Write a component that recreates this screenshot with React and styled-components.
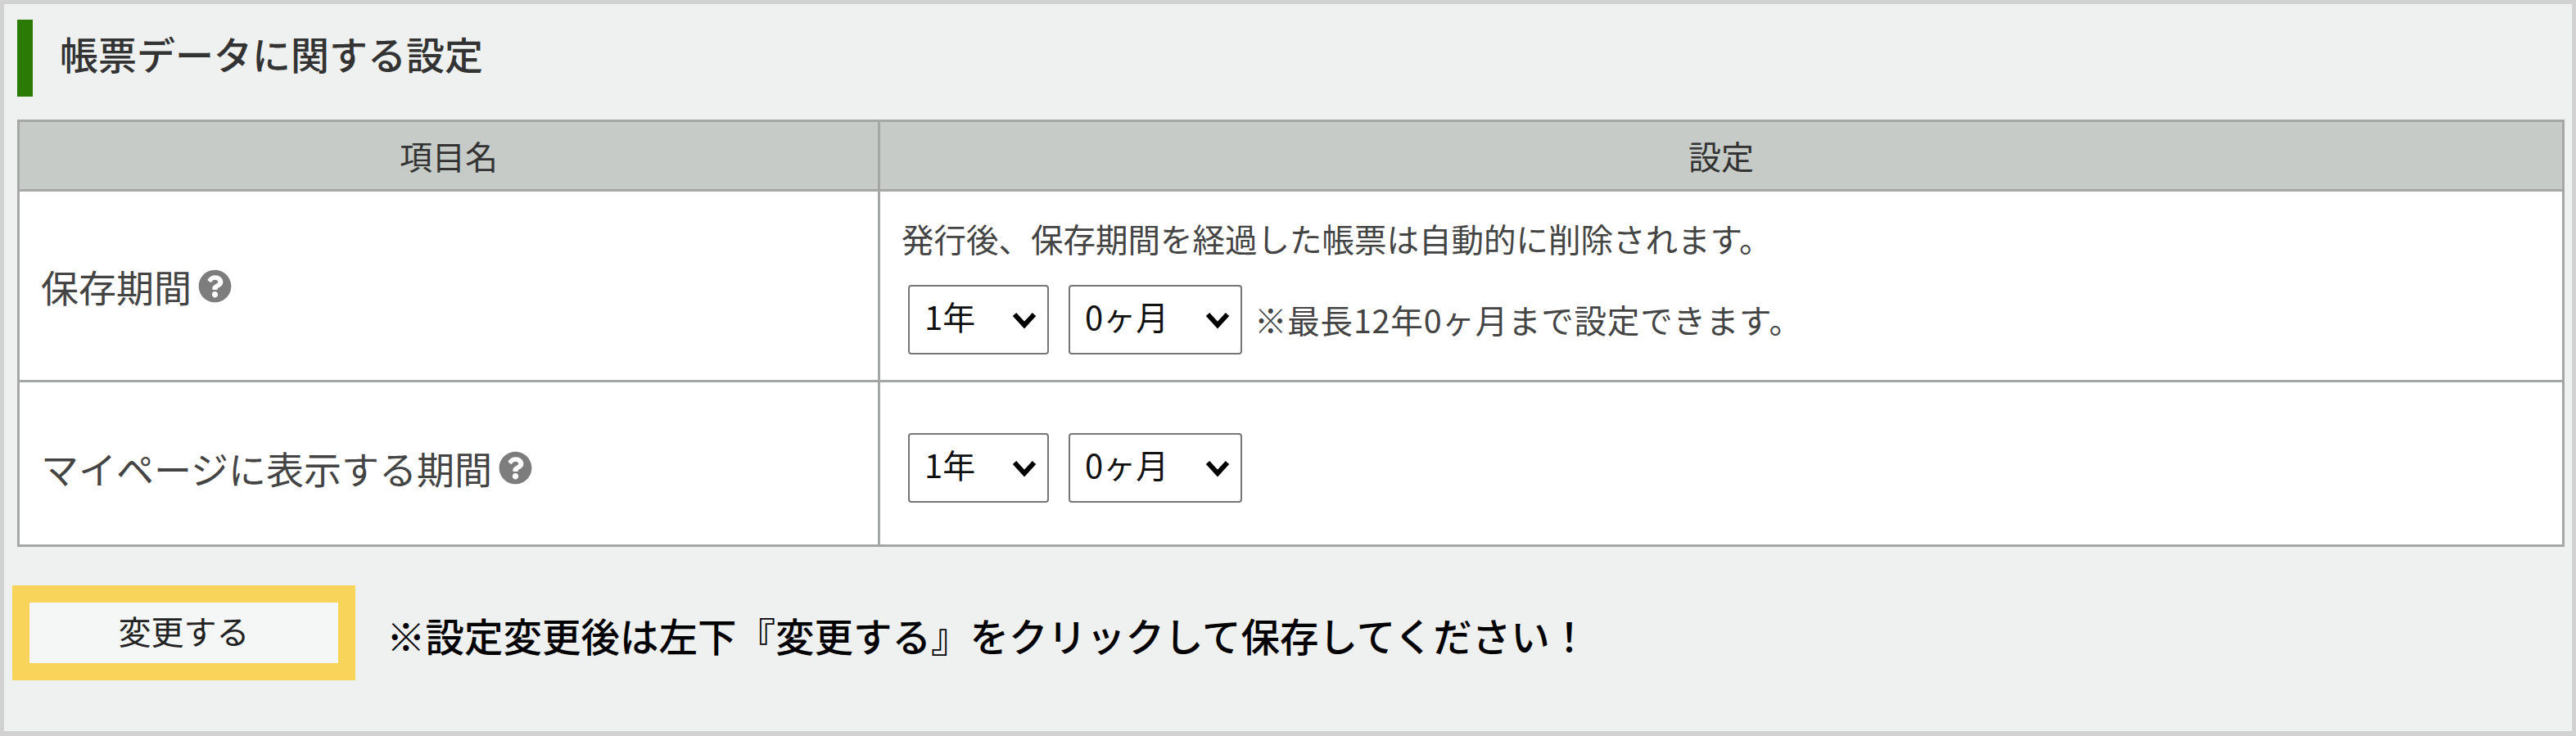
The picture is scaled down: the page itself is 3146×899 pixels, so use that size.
import React from "react";
import styled, { createGlobalStyle } from "styled-components";
import { FaQuestionCircle } from "react-icons/fa";

const GlobalStyle = createGlobalStyle`
  html, body {
    margin: 0;
    padding: 0;
    background: #d2d2d2;
  }
  body {
    font-family: "Noto Sans CJK JP", "Liberation Sans", sans-serif;
    color: #333;
  }
`;

const YEARS = ["1年", "2年", "3年"];
const MONTHS = ["0ヶ月", "1ヶ月", "2ヶ月"];

const PeriodSelect = ({ options, width }) => (
  <SelectWrap $width={width}>
    <Select defaultValue={options[0]}>
      {options.map((o) => (
        <option key={o}>{o}</option>
      ))}
    </Select>
    <Chevron viewBox="0 0 30 24" aria-hidden="true">
      <path d="M3 5 L15 18 L27 5" />
    </Chevron>
  </SelectWrap>
);

const PeriodSelects = () => (
  <>
    <PeriodSelect options={YEARS} width={172} />
    <PeriodSelect options={MONTHS} width={212} />
  </>
);

const App = () => (
  <>
    <GlobalStyle />
    <Page>
      <Title>帳票データに関する設定</Title>
      <SettingsTable>
        <colgroup>
          <col style={{ width: 1051 }} />
          <col />
        </colgroup>
        <thead>
          <tr>
            <HeadCell>項目名</HeadCell>
            <HeadCell>設定</HeadCell>
          </tr>
        </thead>
        <tbody>
          <Row $height={233}>
            <LabelCell>
              <Label>
                保存期間
                <HelpIcon />
              </Label>
            </LabelCell>
            <ValueCell>
              <Description>発行後、保存期間を経過した帳票は自動的に削除されます。</Description>
              <Controls>
                <PeriodSelects />
                <Hint>※最長12年0ヶ月まで設定できます。</Hint>
              </Controls>
            </ValueCell>
          </Row>
          <Row $height={201} $offset={10}>
            <LabelCell>
              <Label>
                マイページに表示する期間
                <HelpIcon />
              </Label>
            </LabelCell>
            <ValueCell>
              <Controls>
                <PeriodSelects />
              </Controls>
            </ValueCell>
          </Row>
        </tbody>
      </SettingsTable>
      <Footer>
        <SaveButton type="button">変更する</SaveButton>
        <Notice>※設定変更後は左下『変更する』をクリックして保存してください！</Notice>
      </Footer>
    </Page>
  </>
);

const Page = styled.div`
  box-sizing: border-box;
  width: 3146px;
  height: 899px;
  border-style: solid;
  border-color: #d2d2d2;
  border-width: 5px 5px 6px 5px;
  padding: 19px 9px 0 16px;
  background: #eff1f0;
  overflow: hidden;
`;

const Title = styled.h2`
  box-sizing: border-box;
  height: 94px;
  margin: 0;
  padding-left: 33px;
  border-left: 19px solid #2b7a05;
  font-size: 47px;
  font-weight: 500;
  line-height: 82px;
  color: #333;
`;

const SettingsTable = styled.table`
  box-sizing: border-box;
  width: 3111px;
  margin-top: 28px;
  table-layout: fixed;
  border-collapse: collapse;
  background: #fff;
  border: 3px solid #a4a7a5;
`;

const HeadCell = styled.th`
  height: 82px;
  padding: 0;
  border: 3px solid #a4a7a5;
  background: #c7cbc7;
  font-size: 40px;
  font-weight: 400;
  line-height: 1;
  color: #333;
`;

const Row = styled.tr`
  height: ${(p) => p.$height}px;

  & > td {
    padding-top: ${(p) => p.$offset || 0}px;
  }
`;

const LabelCell = styled.td`
  padding: 0 0 0 26px;
  border: 3px solid #a4a7a5;
  vertical-align: middle;
`;

const ValueCell = styled.td`
  padding: 0 0 0 26px;
  border: 3px solid #a4a7a5;
  vertical-align: middle;
`;

const Label = styled.div`
  display: flex;
  align-items: center;
  gap: 8px;
  font-size: 46px;
  line-height: 60px;
  color: #444;
`;

const HelpIcon = styled(FaQuestionCircle)`
  width: 41px;
  height: 41px;
  color: #7d7d7d;
`;

const Description = styled.div`
  margin-bottom: 32px;
  font-size: 39.5px;
  line-height: 50px;
  color: #444;
`;

const Controls = styled.div`
  display: flex;
  align-items: center;
  gap: 24px;
  padding-left: 8px;
`;

const SelectWrap = styled.div`
  position: relative;
  width: ${(p) => p.$width}px;
  height: 85px;
`;

const Select = styled.select`
  box-sizing: border-box;
  width: 100%;
  height: 100%;
  padding: 0 0 8px 18px;
  appearance: none;
  border: 2px solid #767676;
  border-radius: 4px;
  background: #fff;
  font-family: inherit;
  font-size: 40px;
  color: #111;
`;

const Chevron = styled.svg`
  position: absolute;
  top: 31px;
  right: 15px;
  width: 30px;
  height: 24px;
  pointer-events: none;

  path {
    fill: none;
    stroke: #000;
    stroke-width: 6;
  }
`;

const Hint = styled.span`
  margin-left: -9px;
  font-size: 39.5px;
  letter-spacing: 0.8px;
  line-height: 50px;
  color: #444;
`;

const Footer = styled.div`
  display: flex;
  align-items: center;
  gap: 38px;
  margin: 47px 0 0 -6px;
`;

const SaveButton = styled.button`
  box-sizing: border-box;
  width: 419px;
  height: 116px;
  padding: 0 0 6px;
  border: 21px solid #f8d55a;
  background: #f5f7f6;
  font-family: inherit;
  font-size: 40px;
  color: #222;
`;

const Notice = styled.p`
  margin: 0;
  padding-top: 6px;
  font-size: 47.5px;
  font-weight: 500;
  line-height: 60px;
  color: #000;
`;

export default App;
